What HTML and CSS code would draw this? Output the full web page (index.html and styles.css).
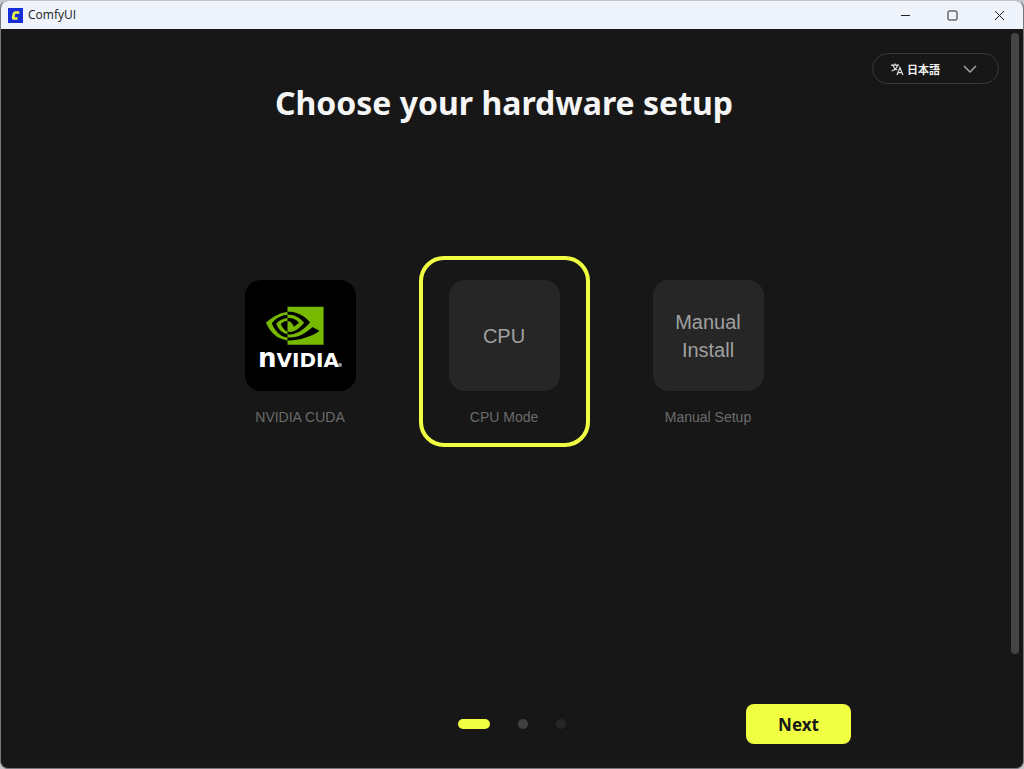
FILE: index.html
```
<!DOCTYPE html>
<html lang="en">
<head>
    <meta charset="UTF-8">
    <meta name="viewport" content="width=device-width, initial-scale=1.0">
    <title>ComfyUI</title>
    <link rel="stylesheet" href="styles.css">
</head>
<body>

    <div class="window">
        <header class="titlebar">
            <svg class="appIcon" viewBox="0 0 15 15" aria-hidden="true">
                <rect width="15" height="15" fill="#172dd7"/>
                <path d="M11.300 4.500H7.6Q6.4 4.500 6 5.500L5.2 9Q4.9 10.500 6.3 10.500H9.500" fill="none" stroke="#f0ff41" stroke-width="2.6"/>
            </svg>
            <span class="appName">ComfyUI</span>
            <button type="button" class="windowButton" aria-label="Minimize">
                <svg viewBox="0 0 11 11"><path d="M1 5.5h9"/></svg>
            </button>
            <button type="button" class="windowButton" aria-label="Maximize">
                <svg viewBox="0 0 11 11"><rect x="1" y="1" width="9" height="9" rx="1"/></svg>
            </button>
            <button type="button" class="windowButton" aria-label="Close">
                <svg viewBox="0 0 11 11"><path d="M1 1l9 9M10 1l-9 9"/></svg>
            </button>
        </header>

        <div class="content">
            <main class="page">
                <h1>Choose your hardware setup</h1>

                <div class="hardware">
                    <button type="button" class="option" aria-pressed="false">
                        <span class="tile nvidia">
                            <svg class="nvidiaLogo" viewBox="0 0 96 80" role="img" aria-label="NVIDIA">
                                <path transform="translate(14 1) scale(2.4)" fill="#76b900" d="M8.948 8.798v-1.43a6.7 6.7 0 0 1 .424-.018c3.922-.124 6.493 3.374 6.493 3.374s-2.774 3.851-5.75 3.851c-.398 0-.787-.062-1.158-.185v-4.346c1.528.185 1.837.857 2.747 2.385l2.04-1.714s-1.492-1.952-4-1.952a6.016 6.016 0 0 0-.796.035m0-4.735v2.138l.424-.027c5.45-.185 9.01 4.47 9.01 4.47s-4.08 4.964-8.33 4.964c-.37 0-.733-.035-1.095-.097v1.325c.3.035.61.062.91.062 3.957 0 6.82-2.023 9.593-4.408.459.371 2.34 1.263 2.73 1.652-2.633 2.208-8.772 3.984-12.253 3.984-.335 0-.653-.018-.971-.053v1.864H24V4.063zm0 10.326v1.131c-3.657-.654-4.673-4.46-4.673-4.46s1.758-1.944 4.673-2.262v1.237H8.94c-1.528-.186-2.73 1.245-2.73 1.245s.68 2.412 2.739 3.11M2.456 10.9s2.164-3.197 6.5-3.533V6.201C4.153 6.59 0 10.653 0 10.653s2.35 6.802 8.948 7.42v-1.237c-4.84-.6-6.492-5.936-6.492-5.936z"/>
                                <text class="wordmark" x="6" y="71"><tspan class="wordmarkN">n</tspan>VIDIA</text>
                                <circle cx="88" cy="69" r="2" fill="#999"/>
                            </svg>
                        </span>
                        <span class="caption">NVIDIA CUDA</span>
                    </button>
                    <button type="button" class="option selected" aria-pressed="true">
                        <span class="tile">CPU</span>
                        <span class="caption">CPU Mode</span>
                    </button>
                    <button type="button" class="option" aria-pressed="false">
                        <span class="tile">Manual Install</span>
                        <span class="caption">Manual Setup</span>
                    </button>
                </div>

                <footer class="footer">
                    <div class="steps">
                        <span class="step current"></span>
                        <span class="step"></span>
                        <span class="step last"></span>
                    </div>
                    <button type="button" class="next">Next</button>
                </footer>
            </main>

            <div class="scrollbar"><div class="thumb"></div></div>

            <div class="language">
                <svg class="translateIcon" viewBox="0 0 14 14" aria-hidden="true">
                    <path d="M1 3.2h8M5 1.4v1.8M7.6 3.2C7 6 4.5 8 1.6 9M2.8 3.4C3.6 5.6 5 7.2 7 8"/>
                    <path d="M7 13l2.9-7.4L12.900 13M8 10.600h3.900"/>
                </svg>
                <select id="language" aria-label="Language">
                    <option>日本語</option>
                </select>
                <svg class="chevron" viewBox="0 0 14 8" aria-hidden="true"><path d="M1 1l6 6 6-6"/></svg>
            </div>
        </div>
    </div>

    <script>
    const options = document.querySelectorAll('.option');

    options.forEach((option) => {
        option.addEventListener('click', () => {
            options.forEach((other) => {
                other.classList.toggle('selected', other === option);
                other.setAttribute('aria-pressed', other === option);
            });
        });
    });
    </script>
</body>
</html>
```
FILE: styles.css
```
* {
    box-sizing: border-box;
}

body {
    margin: 0;
    background-color: #c8c8cc;
    font-family: "Liberation Sans", Arial, sans-serif;
}

button {
    border: none;
    padding: 0;
    background: none;
    font-family: inherit;
    cursor: pointer;
}

.window {
    display: flex;
    flex-direction: column;
    min-height: 100vh;
    border: 1px solid #77777a;
    border-top-color: #c5c6cc;
    border-radius: 8px;
    background-color: #171717;
    overflow: hidden;
}

/* Title bar */
.titlebar {
    display: flex;
    align-items: center;
    height: 28px;
    padding-left: 7px;
    background-color: #eff4fc;
}

.appIcon {
    width: 15px;
    height: 15px;
    margin-right: 5px;
}

.appName {
    flex: 1;
    font-family: "Open Sans", "Noto Sans", sans-serif;
    font-size: 12px;
    line-height: 16px;
    color: #1a1a1a;
}

.windowButton {
    display: flex;
    align-items: center;
    justify-content: center;
    width: 47px;
    height: 28px;
}

.windowButton svg {
    width: 11px;
    height: 11px;
    fill: none;
    stroke: #222;
}

/* Page */
.content {
    position: relative;
    display: flex;
    flex: 1;
}

.page {
    display: flex;
    flex: 1;
    flex-direction: column;
    align-items: center;
    padding: 54px 24px 24px;
}

h1 {
    margin: 0;
    font-family: "Noto Sans", sans-serif;
    font-size: 32px;
    line-height: 40px;
    color: #f5f5f5;
}

.hardware {
    display: flex;
    gap: 33px;
    margin: 133px 0 40px;
}

.option {
    display: flex;
    flex-direction: column;
    align-items: center;
    gap: 16px;
    width: 171px;
    padding: 20px 0 16px;
    border: 4px solid transparent;
    border-radius: 25px;
}

.option.selected {
    border-color: #f0ff41;
}

.tile {
    display: flex;
    align-items: center;
    justify-content: center;
    width: 111px;
    height: 111px;
    padding: 16px;
    border-radius: 16px;
    background-color: #262626;
    color: #a0a0a0;
    font-size: 20px;
    line-height: 28px;
}

.tile.nvidia {
    padding: 0;
    background-color: #000;
}

.nvidiaLogo {
    width: 96px;
    height: 80px;
}

.wordmark {
    fill: #fff;
    font-family: "DejaVu Sans", sans-serif;
    font-size: 20px;
    font-weight: 700;
}

.wordmarkN {
    font-size: 26px;
}

.caption {
    font-size: 14px;
    line-height: 20px;
    color: #6b6b6b;
}

/* Footer */
.footer {
    display: grid;
    grid-template-columns: 1fr auto 1fr;
    align-items: center;
    width: 100%;
    max-width: 694px;
    margin-top: auto;
}

.steps {
    display: flex;
    grid-column: 2;
    gap: 28px;
    padding-left: 16px;
}

.step {
    width: 10px;
    height: 10px;
    border-radius: 5px;
    background-color: #404040;
}

.step.current {
    width: 32px;
    background-color: #f0ff41;
}

.step.last {
    background-color: #262626;
}

.next {
    justify-self: end;
    width: 105px;
    height: 40px;
    border-radius: 8px;
    background-color: #f0ff41;
    color: #171717;
    font-family: "Noto Sans", sans-serif;
    font-size: 17px;
    font-weight: 700;
}

/* Language menu */
.language {
    position: absolute;
    top: 24px;
    right: 24px;
    display: flex;
    align-items: center;
    width: 127px;
    height: 31px;
    padding: 0 21px 0 17px;
    border: 1px solid #3a3a3a;
    border-radius: 16px;
}

.language select {
    flex: 1;
    min-width: 0;
    padding: 0;
    border: none;
    background: none;
    appearance: none;
    color: #f0f0f0;
    font-family: "Noto Sans CJK JP", sans-serif;
    font-size: 11px;
    font-weight: 700;
}

.translateIcon {
    width: 14px;
    height: 14px;
    margin-right: 3px;
    fill: none;
    stroke: #e5e5e5;
    stroke-width: 1.2;
}

.chevron {
    width: 14px;
    height: 8px;
    fill: none;
    stroke: #a3a3a3;
    stroke-width: 1.5;
    pointer-events: none;
}

/* Scrollbar */
.scrollbar {
    display: flex;
    width: 16px;
    padding: 4px;
}

.thumb {
    width: 8px;
    height: 85%;
    border-radius: 4px;
    background-color: #454545;
}
```
